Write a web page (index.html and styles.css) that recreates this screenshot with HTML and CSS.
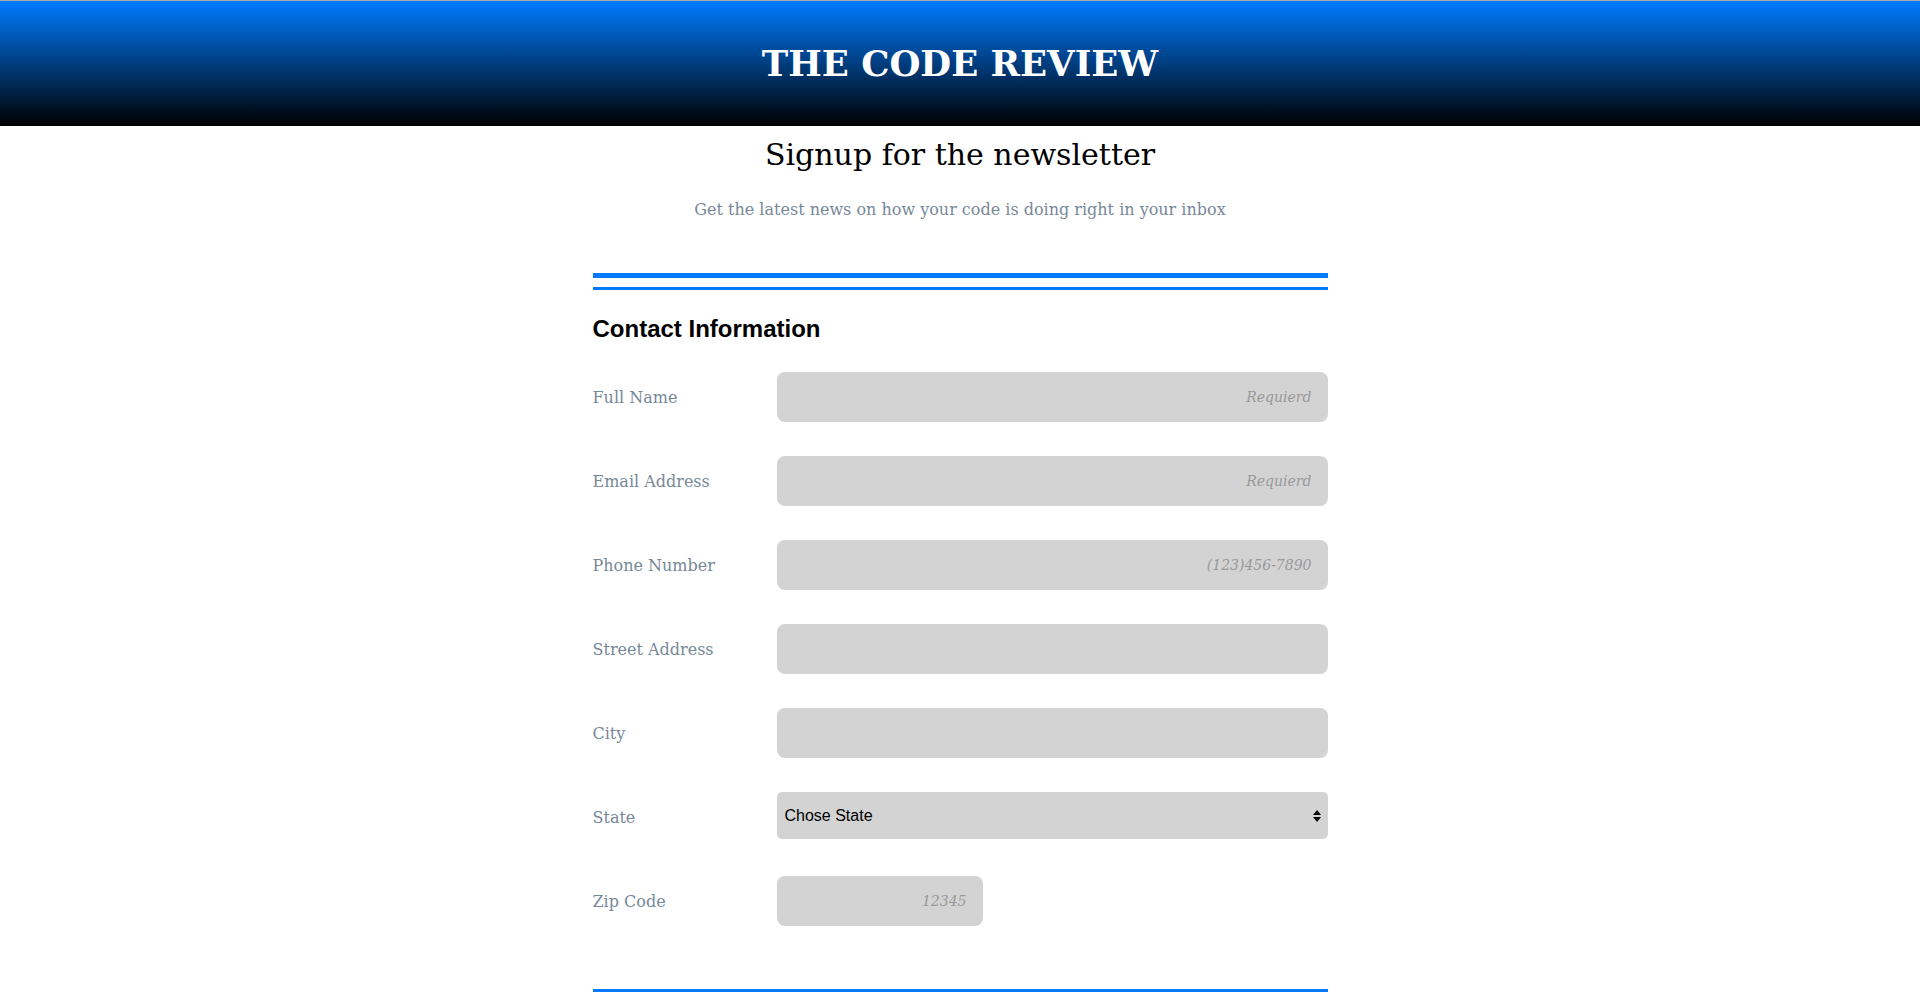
FILE: index.html
```html
<!DOCTYPE html>
<html>
<head>
<meta charset="utf-8">
<link rel="stylesheet" href="styles.css">
</head>
<body>
<header class="masthead">
  <h1 class="brand">THE CODE REVIEW</h1>
</header>
<main class="page">
  <h2 class="title">Signup for the newsletter</h2>
  <p class="lead">Get the latest news on how your code is doing right in your inbox</p>
  <form class="signup">
    <div class="rule-double"></div>
    <h3 class="section-title">Contact Information</h3>
    <div class="row">
      <label class="label">Full Name</label>
      <input class="field" type="text" placeholder="Requierd">
    </div>
    <div class="row">
      <label class="label">Email Address</label>
      <input class="field" type="text" placeholder="Requierd">
    </div>
    <div class="row">
      <label class="label">Phone Number</label>
      <input class="field" type="text" placeholder="(123)456-7890">
    </div>
    <div class="row">
      <label class="label">Street Address</label>
      <input class="field" type="text">
    </div>
    <div class="row">
      <label class="label">City</label>
      <input class="field" type="text">
    </div>
    <div class="row row-select">
      <label class="label">State</label>
      <div class="select">
        <span class="select-text">Chose State</span>
        <svg class="select-arrows" width="8" height="12" viewBox="0 0 8 12"><path d="M4 0 L8 5 L0 5 Z M0 7 L8 7 L4 12 Z" fill="#000"/></svg>
      </div>
    </div>
    <div class="row">
      <label class="label">Zip Code</label>
      <input class="field field-zip" type="text" placeholder="12345">
    </div>
    <div class="rule-single"></div>
  </form>
</main>
</body>
</html>
```

FILE: styles.css
```css
html, body {
  margin: 0;
  padding: 0;
  background: #fff;
}
body {
  font-family: "DejaVu Serif", "Liberation Serif", serif;
}
.masthead {
  height: 125px;
  border-top: 1px solid #a9a9a9;
  background: linear-gradient(to bottom, #007bff 0%, #000 100%);
  display: flex;
  align-items: center;
  justify-content: center;
}
.brand {
  margin: 0;
  color: #fff;
  font-family: "DejaVu Serif", serif;
  font-weight: bold;
  font-size: 35.5px;
}
.page {
  display: flex;
  flex-direction: column;
  align-items: center;
}
.title {
  margin: 11px 0 0;
  font-weight: normal;
  font-size: 30px;
  color: #000;
}
.lead {
  margin: 28px 0 0;
  font-size: 16px;
  color: #778899;
}
.signup {
  width: 735px;
  margin-top: 54px;
}
.rule-double {
  height: 5px;
  background: #007bff;
  position: relative;
}
.rule-double::after {
  content: "";
  position: absolute;
  left: 0;
  right: 0;
  top: 14px;
  height: 3px;
  background: #007bff;
}
.section-title {
  margin: 37px 0 0;
  font-family: "Liberation Sans", Arial, sans-serif;
  font-weight: bold;
  font-size: 24px;
  color: #000;
}
.row {
  display: flex;
  align-items: center;
  margin-top: 29px;
}
.row + .row {
  margin-top: 34px;
}
.label {
  width: 184px;
  flex: none;
  font-size: 16px;
  color: #778899;
}
.field {
  flex: 1;
  height: 50px;
  box-sizing: border-box;
  border: none;
  border-radius: 8px;
  background: #d3d3d3;
  padding: 0 16px;
  text-align: right;
  font-family: "DejaVu Serif", serif;
  font-size: 14px;
  outline: none;
}
.field::placeholder {
  color: #999;
  font-style: italic;
}
.field-zip {
  flex: none;
  width: 206px;
}
.row-select {
  height: 50px;
}
.select {
  flex: 1;
  height: 47px;
  align-self: flex-start;
  box-sizing: border-box;
  border-radius: 5px;
  background: #d3d3d3;
  display: flex;
  align-items: center;
  justify-content: space-between;
  padding: 0 7px 0 8px;
}
.select-text {
  font-family: "Liberation Sans", Arial, sans-serif;
  font-size: 16px;
  color: #000;
}
.rule-single {
  height: 3px;
  background: #007bff;
  margin-top: 63px;
}
```
